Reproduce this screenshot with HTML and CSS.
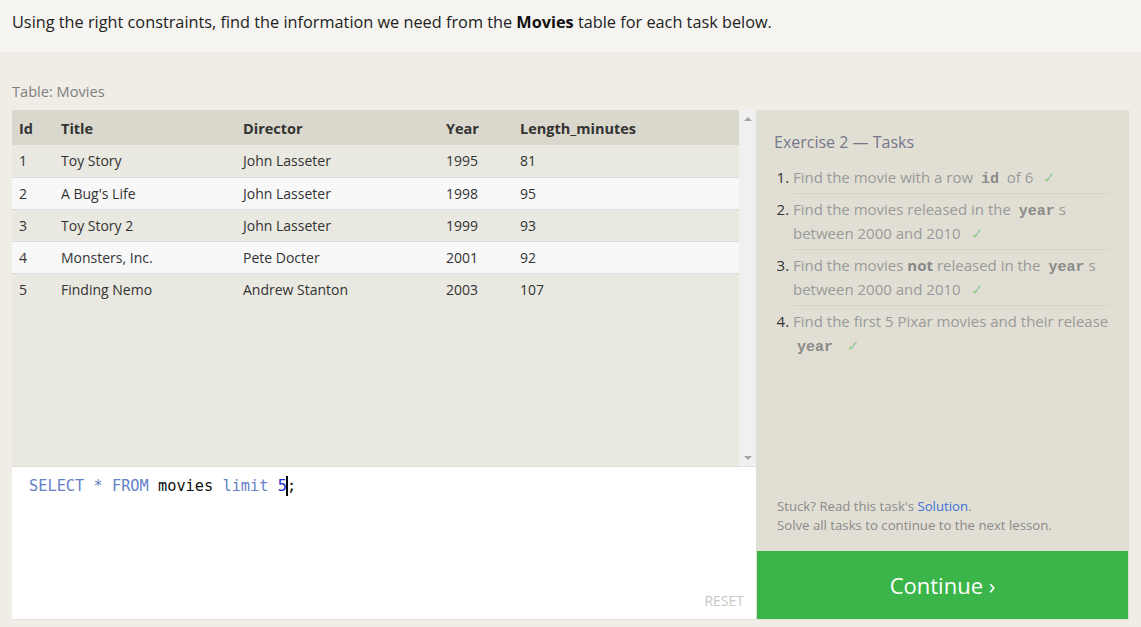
FILE: index.html
```html
<!DOCTYPE html>
<html>
<head>
<meta charset="utf-8">
<link rel="stylesheet" href="styles.css">
</head>
<body>
<div class="intro">Using the right constraints, find the information we need from the <b>Movies</b> table for each task below.</div>
<div class="main">
  <div class="table-label">Table: Movies</div>
  <div class="panel">
    <div class="left">
      <div class="table-area">
        <div class="table-wrap">
          <table class="data">
            <thead>
              <tr><th class="c-id">Id</th><th class="c-title">Title</th><th class="c-dir">Director</th><th class="c-year">Year</th><th>Length_minutes</th></tr>
            </thead>
            <tbody>
              <tr><td>1</td><td>Toy Story</td><td>John Lasseter</td><td>1995</td><td>81</td></tr>
              <tr><td>2</td><td>A Bug's Life</td><td>John Lasseter</td><td>1998</td><td>95</td></tr>
              <tr><td>3</td><td>Toy Story 2</td><td>John Lasseter</td><td>1999</td><td>93</td></tr>
              <tr><td>4</td><td>Monsters, Inc.</td><td>Pete Docter</td><td>2001</td><td>92</td></tr>
              <tr><td>5</td><td>Finding Nemo</td><td>Andrew Stanton</td><td>2003</td><td>107</td></tr>
            </tbody>
          </table>
        </div>
        <div class="scrollbar">
          <span class="arrow up"></span>
          <span class="arrow down"></span>
        </div>
      </div>
      <div class="editor">
        <div class="code"><span class="kw">SELECT</span> <span class="kw">*</span> <span class="kw">FROM</span> movies <span class="kw">limit</span> <span class="num">5</span><span class="cursor"></span>;</div>
        <div class="reset">RESET</div>
      </div>
    </div>
    <div class="right">
      <div class="tasks">
        <div class="tasks-title">Exercise 2 — Tasks</div>
        <ol class="task-list">
          <li>Find the movie with a row <code>id</code> of 6 <span class="check">✓</span></li>
          <li>Find the movies released in the <code>year</code>s between 2000 and 2010 <span class="check">✓</span></li>
          <li>Find the movies <b>not</b> released in the <code>year</code>s between 2000 and 2010 <span class="check">✓</span></li>
          <li>Find the first 5 Pixar movies and their release <code>year</code> <span class="check">✓</span></li>
        </ol>
      </div>
      <div class="hint">
        <div>Stuck? Read this task's <a class="link">Solution</a>.</div>
        <div>Solve all tasks to continue to the next lesson.</div>
      </div>
      <div class="continue">Continue ›</div>
    </div>
  </div>
</div>
</body>
</html>
```

FILE: styles.css
```css
html, body {
  margin: 0;
  padding: 0;
}
body {
  background: #efede6;
  font-family: "Open Sans", "Noto Sans", sans-serif;
  color: #333;
  width: 1141px;
  height: 627px;
  overflow: hidden;
}
.intro {
  background: #f5f4f0;
  height: 52px;
  box-sizing: border-box;
  padding: 11px 12px 0;
  font-size: 16.3px;
  line-height: 22px;
  color: #222;
}
.intro b {
  color: #111;
}
.main {
  padding: 0 12px;
}
.table-label {
  padding-top: 29px;
  height: 58px;
  box-sizing: border-box;
  font-size: 14.6px;
  line-height: 21px;
  color: #808080;
}
.panel {
  display: grid;
  grid-template-columns: 744px 373px;
  height: 510px;
}
.left {
  display: flex;
  flex-direction: column;
  background: #e9e8e1;
}
.table-area {
  height: 356px;
  display: flex;
}
.table-wrap {
  flex: 1;
  background: #e9e8e1;
}
.data {
  width: 100%;
  border-collapse: collapse;
  table-layout: fixed;
  font-size: 14px;
  color: #333;
}
.data th {
  background: #dad8cc;
  height: 35px;
  box-sizing: border-box;
  text-align: left;
  font-weight: bold;
  font-size: 14.5px;
  padding: 1px 0 0 7px;
  color: #333;
}
.data th.c-id { width: 42px; }
.data th.c-title { width: 182px; }
.data th.c-dir { width: 203px; }
.data th.c-year { width: 74px; }
.data td {
  height: 32px;
  padding: 0 0 0 7px;
  box-sizing: border-box;
  border-bottom: 1px solid #dcdcdc;
}
.data tbody tr:nth-child(odd) td { background: #e9e8e1; }
.data tbody tr:nth-child(even) td { background: #f8f8f8; }
.data tbody tr:last-child td { border-bottom: none; }
.scrollbar {
  width: 17px;
  background: #f0f0f0;
  display: flex;
  flex-direction: column;
  justify-content: space-between;
  align-items: center;
  padding: 7px 0 6px;
  box-sizing: border-box;
}
.arrow {
  width: 0;
  height: 0;
  border-left: 4px solid transparent;
  border-right: 4px solid transparent;
}
.arrow.up { border-bottom: 4px solid #a3a3a3; }
.arrow.down { border-top: 4px solid #a3a3a3; }
.editor {
  flex: 1;
  background: #fff;
  border-top: 1px solid #e0e0d8;
  border-bottom: 1px solid #e3e1d9;
  display: flex;
  flex-direction: column;
  justify-content: space-between;
  padding: 9px 12px 9px 17px;
}
.code {
  font-family: "DejaVu Sans Mono", monospace;
  font-size: 15.3px;
  line-height: 20px;
  color: #111;
}
.kw { color: #6581c8; }
.num { color: #1c2ccf; }
.cursor {
  display: inline-block;
  width: 2px;
  height: 20px;
  background: #000;
  vertical-align: -5px;
  margin: 0 -1px 0 -1px;
}
.reset {
  align-self: flex-end;
  font-size: 14px;
  color: #c8c8c8;
  line-height: 18px;
}
.right {
  background: #e1dfd4;
  display: flex;
  flex-direction: column;
}
.tasks {
  flex: 1;
  padding: 21px 20px 0 18px;
}
.tasks-title {
  font-size: 16px;
  color: #75768a;
  line-height: 22px;
  margin-bottom: 12px;
}
.task-list {
  margin: 0;
  padding: 0 0 0 19px;
  font-size: 15px;
  line-height: 24px;
  color: #9a9a9a;
}
.task-list li {
  padding: 0 0 4px 0;
  margin-bottom: 3px;
  border-bottom: 1px solid #d4d2c7;
}
.task-list li:last-child { border-bottom: none; }
.task-list li::marker { color: #333; }
.task-list code {
  font-family: "Liberation Mono", "Courier New", monospace;
  font-weight: bold;
  font-size: 15px;
  line-height: 0;
  color: #8a8a8a;
  padding: 0 4px;
}
.task-list b { color: #888; }
.check {
  color: #95c995;
  margin-left: 6px;
}
.hint {
  padding: 0 0 16px 21px;
  font-size: 13.2px;
  line-height: 19px;
  color: #8a8a8a;
}
.link { color: #3b6fd6; }
.continue {
  height: 68px;
  background: #3bb54a;
  color: #fff;
  font-size: 22px;
  display: flex;
  align-items: center;
  justify-content: center;
  margin: 0 1px 1px 1px;
}
```
